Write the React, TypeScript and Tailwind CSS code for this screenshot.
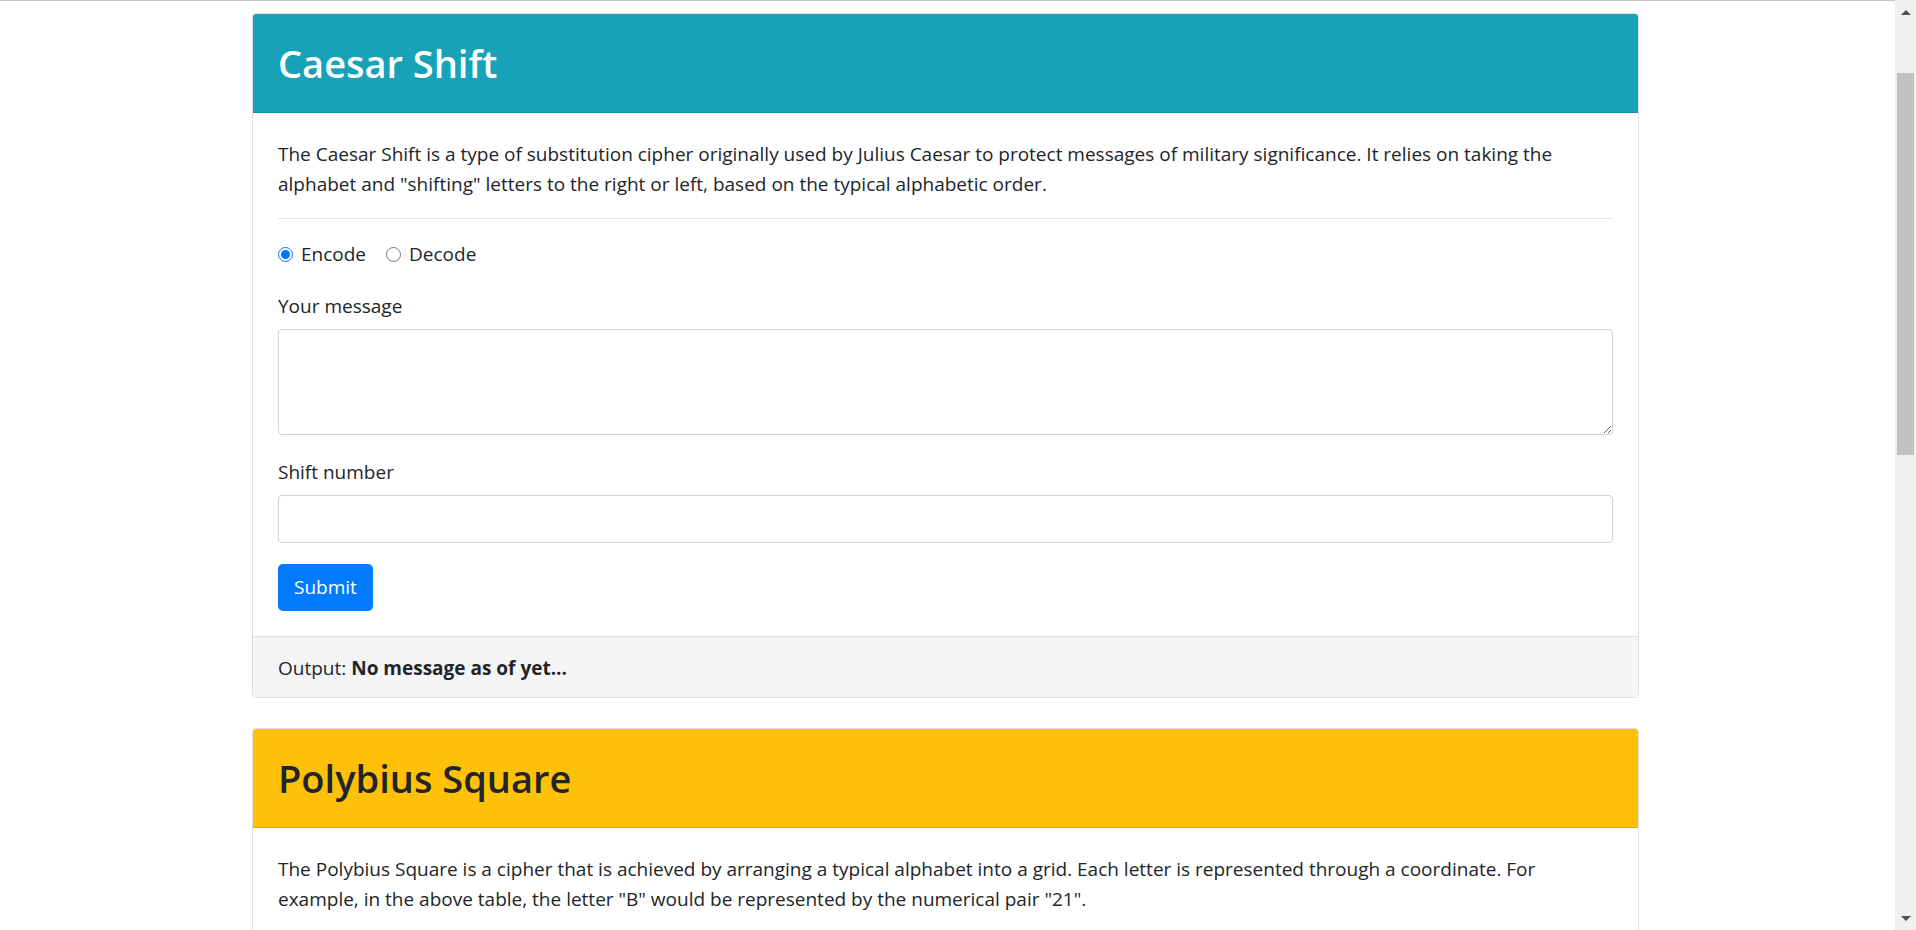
import { useState } from "react";

type CipherCardProps = {
    title: string;
    headerClass: string;
    titleClass: string;
    description: string;
};

const CipherCard = ({ title, headerClass, titleClass, description }: CipherCardProps) => {
    const [mode, setMode] = useState("encode");
    const [message, setMessage] = useState("");
    const [shift, setShift] = useState("");

    return (
        <div className="border border-[#dfdfdf] rounded-[4px] overflow-hidden bg-white">
            <div className={`h-[99px] flex items-center px-[25px] border-b border-[rgba(0,0,0,0.125)] ${headerClass}`}>
                <h1 className={`text-[38px] leading-[48px] font-semibold ${titleClass}`}>{title}</h1>
            </div>
            <div className="px-[25px] pt-[26px] pb-[25px]">
                <p className="leading-[30px]">{description}</p>
                <hr className="mt-[19px] mb-[20px] border-t border-[#e5e5e5]" />
                <div className="h-[30px] flex items-center gap-[20px]">
                    <label className="flex items-center gap-[8px]">
                        <input type="radio" className="w-[15px] h-[15px] m-0 accent-[#0075ff]" checked={mode === "encode"} onChange={() => setMode("encode")} />
                        <span>Encode</span>
                    </label>
                    <label className="flex items-center gap-[8px]">
                        <input type="radio" className="w-[15px] h-[15px] m-0 accent-[#0075ff]" checked={mode === "decode"} onChange={() => setMode("decode")} />
                        <span>Decode</span>
                    </label>
                </div>
                <label className="block mt-[22px] mb-[8px] leading-[30px]">Your message</label>
                <textarea className="block w-full h-[106px] border border-[#ced4da] rounded-[4px] px-3 py-2"
                    value={message} onChange={(e) => setMessage(e.target.value)} />
                <label className="block mt-[22px] mb-[8px] leading-[30px]">Shift number</label>
                <input type="number" className="block w-full h-[48px] border border-[#ced4da] rounded-[4px] px-4"
                    value={shift} onChange={(e) => setShift(e.target.value)} />
                <button className="mt-[21px] h-[47px] px-[16px] bg-[#007bff] text-white text-[19px] rounded-[5px]" type="button">Submit</button>
            </div>
            <div className="bg-[#f5f5f5] border-t border-[#dfdfdf] px-[25px] pt-[16px] pb-[14px] leading-[30px]">
                Output: <span className="font-bold">No message as of yet...</span>
            </div>
        </div>
    );
};

// browser scrollbar as it shows in the screenshot
const FakeScrollbar = () => (
    <div className="fixed top-0 right-0 w-[21px] h-screen bg-[#f0f0f0] flex flex-col items-center">
        <div className="h-[24px] flex items-center">
            <div className="w-0 h-0 border-l-[5px] border-r-[5px] border-b-[5px] border-l-transparent border-r-transparent border-b-[#505050]" />
        </div>
        <div className="mt-[49px] w-[17px] h-[382px] bg-[#c1c1c1]" />
        <div className="flex-1" />
        <div className="h-[24px] flex items-center">
            <div className="w-0 h-0 border-l-[5px] border-r-[5px] border-t-[5px] border-l-transparent border-r-transparent border-t-[#505050]" />
        </div>
    </div>
);

export default function App() {
    return (
        <div className="min-h-screen bg-white text-[#212529] text-[19px] font-['Open_Sans',sans-serif]">
            <div className="h-px bg-[#cfc2c2] mr-[21px]" />
            <div className="ml-[252px] w-[1387px] pt-[12px] pb-10 flex flex-col gap-[30px]">
                <CipherCard
                    title="Caesar Shift"
                    headerClass="bg-[#17a2b8]"
                    titleClass="text-white"
                    description={'The Caesar Shift is a type of substitution cipher originally used by Julius Caesar to protect messages of military significance. It relies on taking the alphabet and "shifting" letters to the right or left, based on the typical alphabetic order.'}
                />
                <CipherCard
                    title="Polybius Square"
                    headerClass="bg-[#ffc107]"
                    titleClass="text-[#212529]"
                    description={'The Polybius Square is a cipher that is achieved by arranging a typical alphabet into a grid. Each letter is represented through a coordinate. For example, in the above table, the letter "B" would be represented by the numerical pair "21".'}
                />
            </div>
            <FakeScrollbar />
        </div>
    );
}
